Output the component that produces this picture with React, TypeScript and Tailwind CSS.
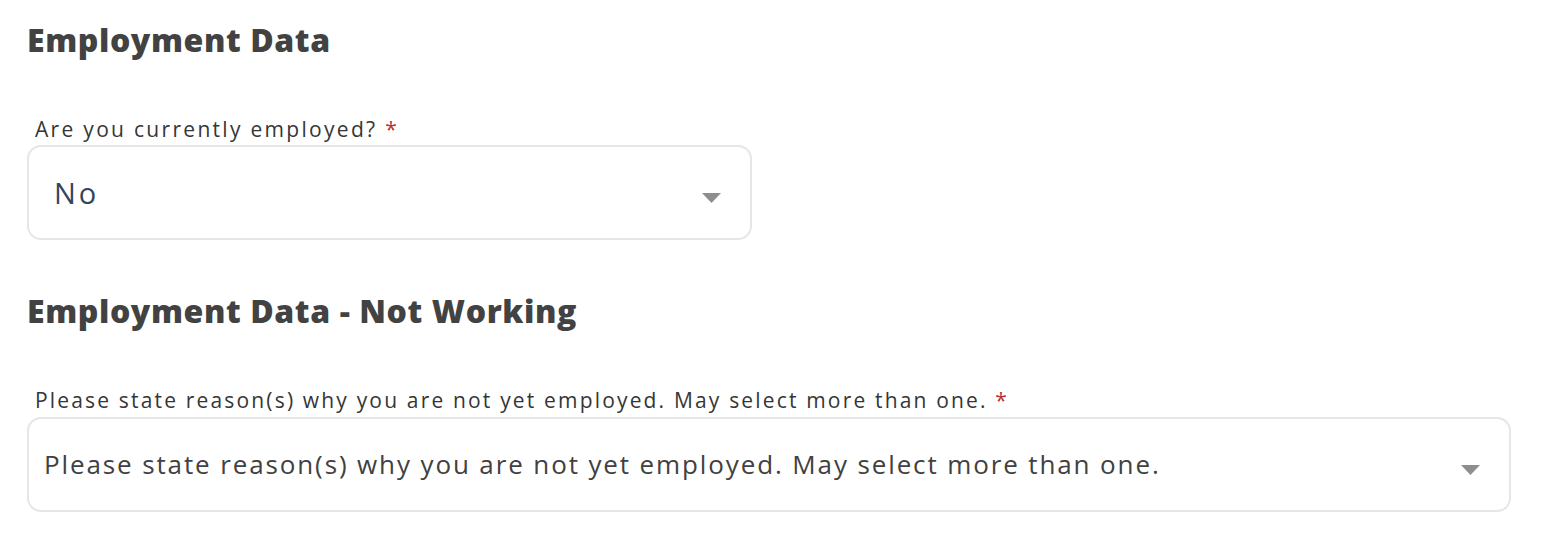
import React from "react";

const Caret = () => (
  <svg width="19" height="10" viewBox="0 0 19 10" className="shrink-0 mt-[10px]">
    <path d="M0 0 L19 0 L9.5 10 Z" fill="#8e8e8e" />
  </svg>
);

const Select = ({ value, className, textClass }: { value: string; className: string; textClass: string }) => (
  <div className={`flex items-center justify-between h-[95px] border-2 border-[#e6e6e6] rounded-[14px] bg-white ${className}`}>
    <span className={textClass}>{value}</span>
    <Caret />
  </div>
);

export default function App() {
  return (
    <div className="min-h-screen bg-white px-[27px] pt-[20px] text-[#404040]" style={{ fontFamily: "'Open Sans', 'Liberation Sans', sans-serif" }}>
      <h2 className="text-[32px] leading-[40px] font-extrabold tracking-[0.6px] text-[#424242]">Employment Data</h2>

      <label className="block mt-[55px] ml-[8px] text-[21px] leading-[28px] tracking-[2.3px] text-[#363636]">
        Are you currently employed? <span className="text-[#b83232]">*</span>
      </label>
      <Select
        value="No"
        className="mt-[2px] w-[725px] pl-[25px] pr-[29px]"
        textClass="text-[29px] tracking-[3px] text-[#354560]"
      />

      <h2 className="mt-[51px] text-[32px] leading-[40px] font-extrabold tracking-[0.6px] text-[#424242]">
        Employment Data - Not Working
      </h2>

      <label className="block mt-[55px] ml-[8px] text-[21px] leading-[28px] tracking-[2.17px] text-[#363636]">
        Please state reason(s) why you are not yet employed. May select more than one.{" "}
        <span className="text-[#b83232]">*</span>
      </label>
      <Select
        value="Please state reason(s) why you are not yet employed. May select more than one."
        className="mt-[3px] w-[1484px] pl-[15px] pr-[29px]"
        textClass="text-[26px] tracking-[1.88px] text-[#414141]"
      />
    </div>
  );
}
